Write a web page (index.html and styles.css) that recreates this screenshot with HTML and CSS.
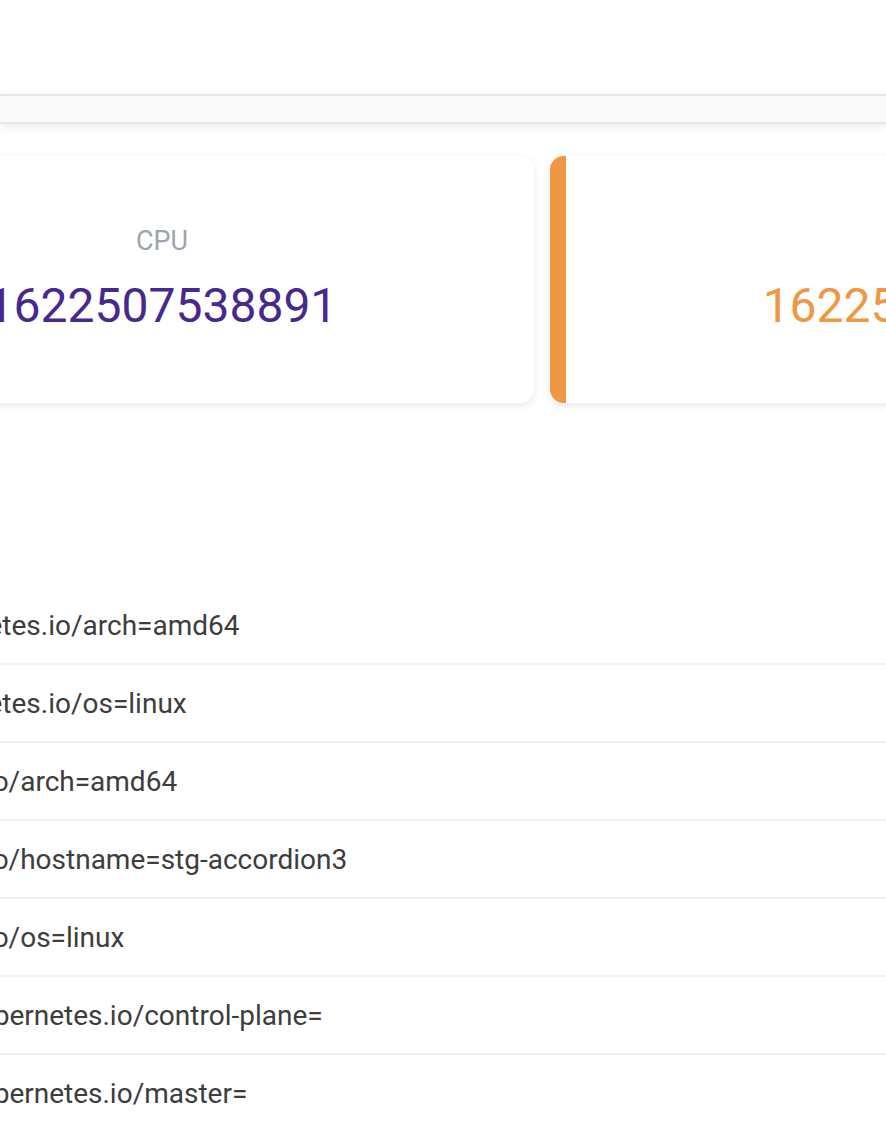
FILE: index.html
```html
<!DOCTYPE html>
<html lang="en">
<head>
<meta charset="utf-8">
<title>Node detail</title>
<link rel="stylesheet" href="styles.css">
</head>
<body>
  <header class="topbar"></header>
  <div class="subbar"></div>
  <main class="page">
    <section class="stats">
      <div class="stat-card">
        <div class="stat-label">CPU</div>
        <div class="stat-value stat-value--purple">1622507538891</div>
      </div>
      <div class="stat-card stat-card--accent">
        <div class="stat-label">&nbsp;</div>
        <div class="stat-value stat-value--orange">1622507538891</div>
      </div>
    </section>
    <ul class="labels">
      <li class="label-row">beta.kubernetes.io/arch=amd64</li>
      <li class="label-row">beta.kubernetes.io/os=linux</li>
      <li class="label-row">kubernetes.io/arch=amd64</li>
      <li class="label-row">kubernetes.io/hostname=stg-accordion3</li>
      <li class="label-row">kubernetes.io/os=linux</li>
      <li class="label-row">node-role.kubernetes.io/control-plane=</li>
      <li class="label-row">node-role.kubernetes.io/master=</li>
    </ul>
  </main>
</body>
</html>
```

FILE: styles.css
```css
html, body {
  margin: 0;
  padding: 0;
  background: #ffffff;
  overflow: hidden;
}

body {
  font-family: Roboto, "Liberation Sans", Arial, sans-serif;
  width: 886px;
  height: 1126px;
}

.topbar {
  height: 94px;
  background: #ffffff;
}

.subbar {
  height: 26px;
  background: #f9f9f9;
  border-top: 2px solid #e6e6e6;
  border-bottom: 2px solid #e8e8e8;
  box-shadow: 0 4px 10px rgba(0, 0, 0, 0.07);
  position: relative;
  z-index: 1;
}

.page {
  margin-left: -218px;
  width: 1800px;
}

.stats {
  display: grid;
  grid-template-columns: 752px 752px;
  gap: 16px;
  margin-top: 32px;
}

.stat-card {
  height: 247px;
  box-sizing: border-box;
  padding-left: 8px;
  background: #ffffff;
  border-radius: 14px;
  box-shadow: 0 3px 10px rgba(0, 0, 0, 0.09);
  display: flex;
  flex-direction: column;
  align-items: center;
  justify-content: center;
  gap: 20px;
}

.stat-card--accent {
  border-left: 16px solid #ef9743;
}

.stat-label {
  font-size: 27px;
  line-height: 32px;
  color: #9da3b0;
}

.stat-value {
  font-size: 48px;
  line-height: 58px;
}

.stat-value--purple {
  color: #47288e;
}

.stat-value--orange {
  color: #ef9743;
}

.labels {
  list-style: none;
  margin: 184px 0 0 58px;
  padding: 0;
}

.label-row {
  height: 78px;
  box-sizing: border-box;
  display: flex;
  align-items: center;
  font-size: 28px;
  color: #3d3d3d;
  border-bottom: 2px solid #f1f1f1;
}
```
